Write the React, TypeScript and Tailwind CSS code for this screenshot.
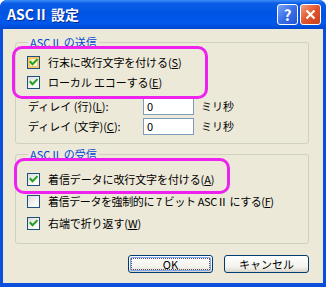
import React from "react";

function Check({ checked, hot }: { checked: boolean; hot?: boolean }) {
  return (
    <span className="relative flex h-[13px] w-[13px] shrink-0 items-center justify-center border border-[#1c5180] bg-[linear-gradient(135deg,#dcdcd7_0%,#f6f6f3_60%,#ffffff_100%)]">
      {hot && (
        <span className="absolute inset-0 border-2 border-[#f9c86a] bg-[linear-gradient(135deg,#fde7b2,#fffbe8)]" />
      )}
      {checked && (
        <svg width="11" height="11" viewBox="0 0 11 11" className="relative">
          <path d="M2.5 5 L4.5 7.2 L8.8 2.8" stroke="#21a121" strokeWidth="2" fill="none" strokeLinecap="square" />
        </svg>
      )}
    </span>
  );
}

function K({ c }: { c: string }) {
  return <span className="underline underline-offset-[1px]">{c}</span>;
}

function CheckRow({
  checked,
  hot,
  h,
  tight,
  children,
}: {
  checked: boolean;
  hot?: boolean;
  h: string;
  tight?: boolean;
  children: React.ReactNode;
}) {
  return (
    <div className={`flex items-center gap-[8px] pl-[11px] ${h}`}>
      <Check checked={checked} hot={hot} />
      <span className={`whitespace-nowrap leading-[12px] ${tight ? "tracking-[-0.4px]" : "tracking-[-0.1px]"}`}>
        {children}
      </span>
    </div>
  );
}

function DelayRow({ children }: { children: React.ReactNode }) {
  return (
    <div className="flex h-[20px] items-center pl-[12px]">
      <span className="w-[115px] whitespace-nowrap leading-[12px]">{children}</span>
      <div className="flex h-[17px] w-[51px] items-center border border-[#7f9db9] bg-white pl-[3px] leading-[12px]">
        0
      </div>
      <span className="ml-[7px] leading-[12px]">ミリ秒</span>
    </div>
  );
}

export default function App() {
  return (
    <div className="flex h-[287px] w-[326px] flex-col overflow-hidden rounded-t-[7px] bg-[#0a4fdc] text-[11px] text-black [font-family:'Noto_Sans_CJK_JP','Noto_Sans',sans-serif]">
      {/* Title bar */}
      <div className="flex h-[29px] shrink-0 items-center bg-[linear-gradient(to_bottom,#3c8ef8_0%,#0a5de6_12%,#0054e3_45%,#0059ec_80%,#0046cf_100%)] pl-[7px] pr-[5px]">
        <span className="text-[14px] font-bold leading-[15px] text-white [text-shadow:1px_1px_0_#0b2a8f]">
          ASCⅡ 設定
        </span>
        <div className="ml-auto flex gap-[2px]">
          <div className="flex h-[21px] w-[21px] items-center justify-center rounded-[3px] border border-white bg-[linear-gradient(135deg,#7ba4f8_0%,#3a6ee8_50%,#2456d8_100%)] text-[15px] font-bold leading-none text-white">
            ?
          </div>
          <div className="flex h-[21px] w-[21px] items-center justify-center rounded-[3px] border border-white bg-[linear-gradient(135deg,#f0a080_0%,#e2542c_50%,#c8401e_100%)]">
            <svg width="11" height="11" viewBox="0 0 11 11">
              <path d="M1.5 1.5 L9.5 9.5 M9.5 1.5 L1.5 9.5" stroke="white" strokeWidth="2.2" />
            </svg>
          </div>
        </div>
      </div>

      {/* Body */}
      <div className="relative mx-[3px] mb-[4px] flex flex-1 flex-col bg-[#ece9d8] pl-[12px] pt-[7px]">
        <fieldset className="w-[294px] rounded-[3px] border border-[#d0d0bf] pb-[7px]">
          <legend className="ml-[12px] px-[2px] leading-[12px] text-[#0046d5]">ASCⅡ の送信</legend>
          <div className="flex flex-col pt-[4px]">
            <CheckRow checked hot h="h-[20px]">
              行末に改行文字を付ける(<K c="S" />)
            </CheckRow>
            <CheckRow checked h="h-[20px]">
              ローカル エコーする(<K c="E" />)
            </CheckRow>
            <div className="mt-[4px] flex flex-col">
              <DelayRow>
                ディレイ (行)(<K c="L" />):
              </DelayRow>
              <DelayRow>
                ディレイ (文字)(<K c="C" />):
              </DelayRow>
            </div>
          </div>
        </fieldset>

        <fieldset className="mt-[4px] w-[294px] rounded-[3px] border border-[#d0d0bf] pb-[9px]">
          <legend className="ml-[12px] px-[2px] leading-[12px] text-[#0046d5]">ASCⅡ の受信</legend>
          <div className="flex flex-col pt-[8px]">
            <CheckRow checked h="h-[22px]">
              着信データに改行文字を付ける(<K c="A" />)
            </CheckRow>
            <CheckRow checked={false} tight h="h-[22px]">
              着信データを強制的に 7 ビット ASCⅡ にする(<K c="F" />)
            </CheckRow>
            <CheckRow checked h="h-[22px]">
              右端で折り返す(<K c="W" />)
            </CheckRow>
          </div>
        </fieldset>

        <div className="mt-[11px] flex gap-[11px] pl-[113px]">
          <div className="flex h-[18px] w-[85px] items-center justify-center rounded-[3px] border border-[#003c74] bg-[linear-gradient(to_bottom,#ffffff_0%,#f3f2ec_70%,#d8d4c8_100%)] p-[1px]">
            <div className="flex h-full w-full items-center justify-center rounded-[2px] border border-[#7fa3f0]">
              <div className="flex h-full w-full items-center justify-center border border-dotted border-[#555] leading-[12px]">
                OK
              </div>
            </div>
          </div>
          <div className="flex h-[18px] w-[85px] items-center justify-center rounded-[3px] border border-[#003c74] bg-[linear-gradient(to_bottom,#ffffff_0%,#f3f2ec_70%,#d8d4c8_100%)] leading-[12px]">
            キャンセル
          </div>
        </div>

        {/* annotation highlights */}
        <div className="pointer-events-none absolute left-[9px] top-[17px] h-[53px] w-[196px] rounded-[10px] border-[3px] border-[#ee22ee]" />
        <div className="pointer-events-none absolute left-[11px] top-[129px] h-[36px] w-[216px] rounded-[10px] border-[3px] border-[#ee22ee]" />
      </div>
    </div>
  );
}
